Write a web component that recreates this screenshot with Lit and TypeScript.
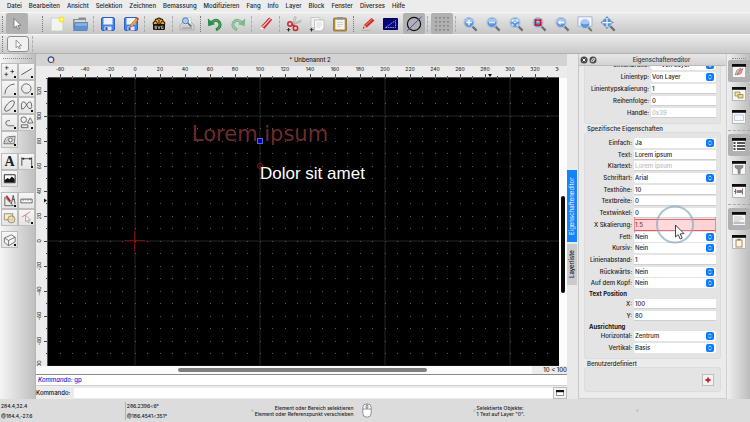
import { LitElement, html, svg, css, nothing } from "lit";
import { customElement, state } from "lit/decorators.js";
import { classMap } from "lit/directives/class-map.js";

const fontStack = css`Inter, Roboto, "Liberation Sans", sans-serif`;

/* ---------- icons ---------- */

const pointer = svg`<path d="M5 2.5V12l2.3-2 1.5 3.4 1.5-.7-1.5-3.2 3-.2z" fill="#fff" stroke="#6a6a6a" stroke-width=".8"/>`;
const lens = (inner: unknown) => svg`
  <path d="M10 10l4.6 4.6" stroke="#6e6e6e" stroke-width="2.2"/>
  <circle cx="7" cy="6.6" r="5" fill="#5a95dd" stroke="#b4c3d6" stroke-width="1.300"/>
  <path d="M2.8 5.6a4.400 4.400 0 0 1 8.4 0q-4.200 2-8.400 0z" fill="#a3c8f2"/>${inner}`;
const page = svg`<path d="M2 2h12v13H2z" fill="#f3f3ef" stroke="#c9c9c2" stroke-width=".8"/>`;
const floppy = svg`
  <rect x="1.5" y="1.5" width="13" height="13" rx="1.5" fill="#4a83e8" stroke="#2e5fc0"/>
  <path d="M3.5 2h9v6.500h-9z" fill="#eef3fc"/><path d="M4.500 10.500h7v4h-7z" fill="#dfe6f2"/>
  <path d="M5.500 11.200h2v2.800h-2z" fill="#35518c"/>`;

const toolbarIcons: Record<string, unknown> = {
  pointer,
  new: svg`${page}<circle cx="12.500" cy="3.500" r="3" fill="#f2e92c"/><circle cx="12.500" cy="3.500" r="1.300" fill="#fffbb0"/>`,
  open: svg`<path d="M1 3h5l1-1.500h7V12H1z" fill="#8b8f93"/><path d="M2.500 4h11v3h-11z" fill="#d5d7d8"/>
    <path d="M3 6.500h13l-1 8H1.500z" fill="#5f93cf" stroke="#4677b4" stroke-width=".7"/><path d="M3.600 7.200h11.600l-.3 2.500H3z" fill="#8ab3e0"/>`,
  save: floppy,
  saveAs: svg`${floppy}<path d="M7 11l.8-2.600L14 1.500l1.800 1.600-6.300 7z" fill="#f0a43a" stroke="#a8621a" stroke-width=".6"/>
    <path d="M13 2.600L14 1.500l1.800 1.600-1 1.100z" fill="#c8452e"/>`,
  svgExport: svg`<path d="M2.500 8.500Q1.500 6 4 5.500 4 2.500 6.200 3.200 8 .8 9.800 3.200 12 2.500 12 5.500q2.500.5 1.500 3z" fill="#f2a12c" stroke="#1a1206" stroke-width="1.100"/>
    <path d="M8 3.500v5M5 5l2 3.500M11 5L9 8.500" stroke="#1a1206" stroke-width=".9"/>
    <path d="M2 8.500h12v4.300q0 1.200-1.200 1.200H3.200Q2 14 2 12.800z" fill="#17130f"/>
    <path d="M5.700 10.200H3.900v1.100h1.600v1.400H3.700M6.800 9.900l1.200 2.900 1.200-2.900M12.300 10.200h-1.800v2.400h1.700v-1.200" stroke="#e6e2da" stroke-width=".7" fill="none"/>`,
  print: svg`<path d="M1 9l2.500-2.500h9L15 9v5H1z" fill="#d2d2d2" stroke="#a2a2a2" stroke-width=".7"/><path d="M4 1.500h8V9H4z" fill="#f4f6f8" stroke="#b5bcc4" stroke-width=".6"/>
    <circle cx="6.500" cy="4.800" r="3" fill="#a9cdf0" stroke="#5580b4"/><path d="M8.800 7l3.500 3.500" stroke="#5c6670" stroke-width="1.600"/><path d="M3 12h10" stroke="#888"/>`,
  undo: svg`<path d="M4.500 6.500q5-4.500 8 0 2.200 4.800-3.500 7.300" fill="none" stroke="#1e7d3c" stroke-width="3"/><path d="M4.500 6.500q5-4.500 8 0 2 4-2.500 6.700" fill="none" stroke="#43a75e" stroke-width="1.300"/><path d="M.8 2.500l.4 7.700 6.800-2z" fill="#2b8f49"/>`,
  redo: svg`<path d="M11.500 6.500q-5-4.500-8 0-2.200 4.800 3.500 7.300" fill="none" stroke="#74b189" stroke-width="3"/><path d="M11.500 6.500q-5-4.500-8 0-2 4 2.500 6.700" fill="none" stroke="#a5cfb2" stroke-width="1.200"/><path d="M15.200 2.500l-.4 7.700-6.800-2z" fill="#7db991"/>`,
  erase: svg`<path d="M3 10.500L11 1.500l3.200 2.300L6.300 13z" fill="#d8272b"/><path d="M4.500 11.200L12.500 2.600" stroke="#f6d6d6" stroke-width="1.200"/><path d="M3 10.500L6.300 13l-1.300 1.200q-2.500.3-3.500-2.200z" fill="#fbfbfb" stroke="#b98" stroke-width=".5"/>`,
  cut: svg`<path d="M6.500 9L14.500 4.200l.5 1.500z" fill="#d9d9d9" stroke="#999" stroke-width=".6"/><path d="M7.500 9.500L8.200.8l2 .2z" fill="#ececec" stroke="#999" stroke-width=".6"/>
    <circle cx="4" cy="8" r="2.200" fill="none" stroke="#d1242a" stroke-width="1.500"/><circle cx="9.500" cy="12.300" r="2.200" fill="none" stroke="#d1242a" stroke-width="1.500"/><path d="M5.500 8.500L8.800 10.500" stroke="#d1242a" stroke-width="1.500"/><path d="M2.500 12v3.500M.8 13.700h3.500" stroke="#222" stroke-width=".9"/>`,
  copy: svg`<path d="M2 1.500h9v10H2z" fill="#f0f0ee" stroke="#bbb" stroke-width=".7"/><path d="M5.500 4h9.500v8l-2.500 3h-7z" fill="#fafafa" stroke="#b0b0b0" stroke-width=".7"/><path d="M7.500 7h5.500M7.500 9h5.500M7.500 11h4" stroke="#cfcfcf" stroke-width=".8"/><path d="M2.500 12v3.500M.8 13.700h3.500" stroke="#222" stroke-width=".9"/>`,
  paste: svg`<rect x="1.500" y="2" width="13" height="13" rx="1" fill="#b78b3e" stroke="#8b6526" stroke-width=".7"/><path d="M3.300 3.500h9.400v10H3.300z" fill="#f3f3f0"/><path d="M5 1h6v2.600H5z" fill="#8e9196"/><path d="M5 6.500h6M5 8.500h6M5 10.500h4" stroke="#c4c4c4" stroke-width=".8"/>`,
  pencil: svg`<path d="M3 12.500L4 9l7.500-7 3 2.500-7.700 7z" fill="#d42a23"/><path d="M5.500 9.700l7-6.800" stroke="#f08a76"/><path d="M3 12.500L4 9l2.800 2.500z" fill="#e7c690"/><path d="M3 12.500l.5-1.500 1 .9z" fill="#222"/><path d="M1 14.500h10" stroke="#c9a4a0" stroke-width=".8"/>`,
  draft: svg`<path d="M.5 2.500h14v11H.5z" fill="#07077c" stroke="#04044f"/><path d="M2.500 11.500L12.500 4.500v7z" fill="none" stroke="#b8bcea" stroke-width=".8" stroke-dasharray="1.500 .8"/>`,
  linewidth: svg`<circle cx="8" cy="8" r="6.600" fill="none" stroke="#111" stroke-width="1.200"/><path d="M1 15L15.500.8" stroke="#3c3fd0" stroke-width=".9"/>`,
  grid: svg`<g stroke="#555" stroke-width=".9" stroke-dasharray="1.500 2.500"><path d="M2 1v15M6 1v15M10 1v15M14 1v15"/></g>`,
  zoomIn: lens(svg`<path d="M7 3.900v5.400M4.300 6.600h5.400" stroke="#fff" stroke-width="1.400"/>`),
  zoomOut: lens(svg`<path d="M4 6.600h6" stroke="#dbe9fb" stroke-width="1.400"/>`),
  zoomAuto: lens(svg`<path d="M4.200 5.500V4h1.600M8.200 4h1.600v1.500M9.800 7.700v1.500H8.200M5.800 9.200H4.200V7.700M6 6.600h2" stroke="#fff" stroke-width=".9" fill="none"/>`),
  zoomSel: lens(svg`<path d="M4.500 4.200h5v5h-5z" fill="none" stroke="#d0101c" stroke-width="1.300"/><path d="M3.600 3.300h2v2h-2zM8.400 3.300h2v2h-2zM3.600 8.100h2v2h-2zM8.400 8.100h2v2h-2z" fill="#e01020"/>`),
  zoomPrev: lens(svg`<path d="M3.500 6.600L6.500 4.200v1.600h4v1.600h-4V9z" fill="#fff"/>`),
  zoomWindow: svg`<path d="M1 .8h14v9.500H1z" fill="#f2f5fb" stroke="#9db0d4" stroke-width=".9"/><path d="M11 11l3.800 4" stroke="#777" stroke-width="2"/><circle cx="8" cy="8" r="4.600" fill="#5d97df" stroke="#c5d0e0"/><path d="M4 7.500a4 4 0 0 1 8 0q-4 1.500-8 0z" fill="#a4c8f3"/>`,
  zoomPan: svg`<path d="M10 10l4.600 4.600" stroke="#6e6e6e" stroke-width="2.200"/><circle cx="7" cy="6.600" r="4.600" fill="#5591dd" stroke="#aebfd6"/><path d="M7 .5v12.200M.9 6.600h12.200" stroke="#fff" stroke-width="1.100"/><path d="M7 0l1.500 2h-3zM7 13.200l1.500-2h-3zM.4 6.600l2-1.500v3zM13.600 6.600l-2-1.500v3z" fill="#5b82b8"/>`,
};

const toolIcons: Record<string, unknown> = {
  point: svg`<path d="M5 2v4M3 4h4M4.500 9v4M2.500 11h4M11 6v4M9 8h4" stroke="#333" stroke-width=".8"/>`,
  line: svg`<path d="M2.500 11.500L13.500 5" stroke="#444" stroke-width=".9"/>`,
  arc: svg`<path d="M3 14Q4 4 13.500 3.200" stroke="#555" stroke-width=".9" fill="none"/>`,
  circle: svg`<circle cx="7.800" cy="8" r="5" fill="none" stroke="#555" stroke-width=".9"/>`,
  ellipse: svg`<ellipse cx="8" cy="8.500" rx="7" ry="3" transform="rotate(-48 8 8.500)" fill="none" stroke="#555" stroke-width=".9"/>`,
  spline: svg`<path d="M3 12Q1.500 5 4.500 4q2.500 0 4 4t4 3.500q2-2 .5-6.500-2-2.500-5 2.500T3 12z" fill="none" stroke="#555" stroke-width=".9"/>`,
  polyline: svg`<path d="M13 11.500H7Q4 11 4 8.500T7 6h1.500" fill="none" stroke="#555" stroke-width=".9"/>`,
  shape: svg`<circle cx="5" cy="5" r="3" fill="none" stroke="#555" stroke-width=".9"/><path d="M9 8.500L12 3l3 5.500zM2.500 10.500h7v3h-7z" fill="none" stroke="#555" stroke-width=".9"/>`,
  hatch: svg`<path d="M2 12.500q1-7 5-7.500l7-.5-1 8z" fill="#ddd" stroke="#555" stroke-width=".8"/><path d="M3 11l5-5M5 12l7-7M8 12l5-5" stroke="#888" stroke-width=".6"/><circle cx="9" cy="8.500" r="2" fill="#f2f2f2" stroke="#555" stroke-width=".8"/>`,
  text: nothing,
  dimension: svg`<path d="M3 3.500v9M13.500 3.500v9M3 5h10.500" stroke="#333" stroke-width=".9"/><path d="M3 5l2.500-1.300v2.600zM13.500 5L11 3.700v2.600z" fill="#222"/>`,
  image: svg`<path d="M2.500 4h11.500v8.500H2.500z" fill="#fff" stroke="#222"/><path d="M3 12V9.500l3-2 2 1.300 2.500-3 3 2.700V12z" fill="#111"/>`,
  modify: svg`<path d="M3 4.500v9h9z" fill="none" stroke="#555" stroke-width=".9"/><path d="M4.500 3l4.500 6" stroke="#c3262a" stroke-width="2"/><path d="M12 2.500l-2 9M12 2.500l2 9M11 7h2.500" stroke="#444" stroke-width=".9"/>`,
  measure: svg`<path d="M2 6.500h12v4H2z" fill="#fafafa" stroke="#555" stroke-width=".9"/><path d="M4.500 6.500v2M7 6.500v1.500M9.500 6.500v2M12 6.500v1.500" stroke="#555" stroke-width=".7"/>`,
  block: svg`<path d="M2.500 4h9v6.500h-9z" fill="#f8ecc0" stroke="#777" stroke-width=".8"/><circle cx="10" cy="10" r="3.800" fill="#f3dd8e" fill-opacity=".7" stroke="#777" stroke-width=".8"/>`,
  select: svg`<path d="M3 7.500L12 2" stroke="#e46a6a" stroke-width=".9"/><path d="M7 5.500v7l1.700-1.400L10 13.800l1-.5-1-2.600 2.200-.2z" fill="#f5f5f5" stroke="#8a8a8a" stroke-width=".7"/>`,
  iso: svg`<path d="M2.500 6.500L10 3l4 2.500v5L7 14.500 2.500 11zM2.500 6.500L7 9v5.500M7 9l7-3.500" fill="#f4f4f4" stroke="#555" stroke-width=".8"/>`,
};

const dockBody: Record<string, unknown> = {
  layer: svg`<path d="M4 12l2-5 4-2-2 5z" fill="#ccc" stroke="#777" stroke-width=".6"/><path d="M6 12l2-4 4-2.500-2 5z" fill="#e79c93" stroke="#a55" stroke-width=".6"/>`,
  block: svg`<path d="M4 6h5v4H4z" fill="#f4e5a8" stroke="#887744" stroke-width=".7"/><path d="M7 8.500h5v3.500H7z" fill="#f0d880" stroke="#887744" stroke-width=".7"/>`,
  view: svg`<path d="M3.500 6h9v5.500h-9z" fill="#f4f8fd" stroke="#a9c4e4" stroke-width=".8"/>`,
  list: svg`<path d="M2.500 6h2M2.500 9h2M2.500 12h2" stroke="#111" stroke-width="1.300"/><path d="M6 6h8M6 9h8M6 12h8" stroke="#222" stroke-width="1.300"/>`,
  filter: svg`<path d="M4 5.500h8v2L9.200 9.500v4H7v-4L4 7.500z" fill="#8e8e8e" stroke="#666" stroke-width=".5"/>`,
  library: svg`<path d="M4.500 6v5M11.500 5.500v6M3 8.500h2" stroke="#555" stroke-width=".8"/><path d="M5.500 7h6v3h-6z" fill="#888"/><path d="M8 8.500h3" stroke="#c44" stroke-width=".7"/>`,
  command: svg`<path d="M3 6h8M3 8h10M3 10h6" stroke="#b5b5b5" stroke-width=".8"/><path d="M2.500 12h11" stroke="#777" stroke-width=".9"/>`,
  clipboard: svg`<path d="M4.500 5.500h7v8h-7z" fill="#b5883c"/><path d="M5.500 6.500h5v6h-5z" fill="#f5f5f5"/><path d="M6.500 4.800h3v1.500h-3z" fill="#777"/>`,
};

const icon16 = (body: unknown) =>
  html`<svg class="ico" viewBox="0 0 16 16" aria-hidden="true">${body}</svg>`;

/* ---------- drawing area ---------- */

const STEP = 12.5;
const ORIGIN_X = 87;
const ORIGIN_Y = 163;
const range = (from: number, to: number) =>
  Array.from({ length: Math.max(0, to - from + 1) }, (_, i) => from + i);

@customElement("cad-canvas")
export class CadCanvas extends LitElement {
  static styles = css`
    :host {
      display: grid;
      grid-template-columns: 12px minmax(0, 1fr) 8px;
      grid-template-rows: 12px minmax(0, 1fr);
      font-family: ${fontStack};
      background: #ececec;
      min-height: 0;
    }
    svg { display: block; width: 100%; height: 100%; min-height: 0; overflow: hidden; }
    .cell { overflow: hidden; min-height: 0; min-width: 0; position: relative; }
    .cell svg { position: absolute; inset: 0; }
    .num { font-size: 5px; font-weight: 500; fill: #333; text-anchor: middle; }
    .tick { stroke: #444; }
    .edge { stroke: #555; }
    .view { background: #000; }
    .axis { stroke: #131313; stroke-width: 2; }
    .dot { fill: #5c5c5c; }
    .zero { stroke: #7a0a0a; }
    .wide { font-family: "DejaVu Sans", sans-serif; font-size: 21px; fill: #6b2c2c; text-anchor: middle; }
    .plain { font-family: "Liberation Sans", Arial, sans-serif; font-size: 17px; fill: #fff; }
    .vscroll { background: #fcfcfc; grid-row: 1 / 3; grid-column: 3; display: flex; flex-direction: column; align-items: center; margin-top: 12px; }
    .vbefore { flex: 118; }
    .vthumb { flex: 97; width: 4px; border-radius: 2px; background: #0a0a0a; }
    .vafter { flex: 73; }
  `;

  @state() private viewWidth = 511;
  @state() private viewHeight = 288;
  private observer?: ResizeObserver;

  firstUpdated() {
    const view = this.renderRoot.querySelector(".view")!;
    this.observer = new ResizeObserver(([entry]) => {
      this.viewWidth = entry.contentRect.width;
      this.viewHeight = entry.contentRect.height;
    });
    this.observer.observe(view);
  }

  disconnectedCallback() {
    super.disconnectedCallback();
    this.observer?.disconnect();
  }

  render() {
    const x = (n: number) => ORIGIN_X + n * STEP;
    const y = (n: number) => ORIGIN_Y - n * STEP;
    const cols = range(Math.ceil(-ORIGIN_X / STEP), Math.ceil((this.viewWidth - ORIGIN_X) / STEP));
    const rows = range(-Math.ceil((this.viewHeight - ORIGIN_Y) / STEP), Math.floor(ORIGIN_Y / STEP));
    const major = (n: number) => n % 10 === 0;
    return html`
      <div class="cell"></div>
      <div class="cell"><svg>
        ${cols.map((n) => svg`<path class="tick" d="M${Math.floor(x(n)) + 0.5} ${n % 2 ? 10 : 8}V12"/>
          ${n % 2 ? nothing : svg`<text class="num" x=${x(n)} y="5">${n * 10}</text>`}`)}
        <path d="M440 8h4l-2 3z" fill="#111"/>
        <path class="edge" d="M0 11.500H${this.viewWidth}"/>
      </svg></div>
      <div class="cell"><svg>
        ${rows.map((n) => svg`<path class="tick" d="M${n % 2 ? 10 : 8} ${Math.floor(y(n)) + 0.5}H12"/>
          ${n % 2 ? nothing : svg`<text class="num" transform="translate(5 ${y(n)}) rotate(-90)">${n * 10}</text>`}`)}
        <path d="M8 120.500v4l3-2z" fill="#111"/>
        <path class="edge" d="M11.500 0V${this.viewHeight}"/>
      </svg></div>
      <div class="cell view"><svg role="img" aria-label="Zeichnung">
        ${cols.filter(major).map((n) => svg`<path class="axis" d="M${x(n)} 0V${this.viewHeight}"/>`)}
        ${rows.filter(major).map((n) => svg`<path class="axis" d="M0 ${y(n)}H${this.viewWidth}"/>`)}
        ${rows.map((r) => cols.map((c) => svg`<rect class="dot" x=${Math.floor(x(c))} y=${Math.floor(y(r))} width="1" height="1"/>`))}
        <path class="zero" d="M77 162.500h20M86.500 153v20"/>
        <text class="wide" x="212" y="63">Lorem ipsum</text>
        <rect x="209.500" y="60.500" width="5" height="5" fill="#0000c4" stroke="#5a6ac0"/>
        <circle cx="212" cy="88" r="2.500" fill="none" stroke="#a80c0c"/>
        <text class="plain" x="212" y="101">Dolor sit amet</text>
      </svg></div>
      <div class="vscroll"><i class="vbefore"></i><i class="vthumb"></i><i class="vafter"></i></div>
    `;
  }
}

/* ---------- property editor ---------- */

type Field = { label: string; value?: string; kind: "select" | "input" | "muted" | "hot" | "head" };

const general: Field[] = [
  { label: "Linienbreite:", value: "—\u00a0\u00a0Von Layer", kind: "select" },
  { label: "Linientyp:", value: "Von Layer", kind: "select" },
  { label: "Linientypskalierung:", value: "1", kind: "input" },
  { label: "Reihenfolge:", value: "0", kind: "input" },
  { label: "Handle:", value: "0x39", kind: "muted" },
];
const specific: Field[] = [
  { label: "Einfach:", value: "Ja", kind: "select" },
  { label: "Text:", value: "Lorem ipsum", kind: "input" },
  { label: "Klartext:", value: "Lorem ipsum", kind: "muted" },
  { label: "Schriftart:", value: "Arial", kind: "select" },
  { label: "Texthöhe:", value: "10", kind: "input" },
  { label: "Textbreite:", value: "0", kind: "input" },
  { label: "Textwinkel:", value: "0", kind: "input" },
  { label: "X Skalierung:", value: "1.5", kind: "hot" },
  { label: "Fett:", value: "Nein", kind: "select" },
  { label: "Kursiv:", value: "Nein", kind: "select" },
  { label: "Linienabstand:", value: "1", kind: "input" },
  { label: "Rückwärts:", value: "Nein", kind: "select" },
  { label: "Auf dem Kopf:", value: "Nein", kind: "select" },
  { label: "Text Position", kind: "head" },
  { label: "X:", value: "100", kind: "input" },
  { label: "Y:", value: "80", kind: "input" },
  { label: "Ausrichtung", kind: "head" },
  { label: "Horizontal:", value: "Zentrum", kind: "select" },
  { label: "Vertikal:", value: "Basis", kind: "select" },
];

@customElement("property-editor")
export class PropertyEditor extends LitElement {
  static styles = css`
    * { box-sizing: border-box; }
    :host {
      display: flex;
      flex-direction: column;
      font: 500 6px/8px ${fontStack};
      color: #222;
      background: #ebebeb;
      border-left: 1px solid #c6c6c6;
      border-right: 1px solid #cfcfcf;
      border-bottom: 1px solid #cfcfcf;
    }
    .bar { height: 12px; display: flex; align-items: center; padding-left: 1px; gap: 1px; background: linear-gradient(#e8e8e8, #d2d2d2); border-bottom: 1px solid #bbb; }
    .bar button { width: 8px; height: 8px; border: 0; padding: 0; background: none; }
    .bar svg { display: block; width: 8px; height: 8px; }
    .title { flex: 1; margin: 0; padding-right: 1px; text-align: center; font: inherit; color: #333; }
    .body { flex: 1; display: flex; flex-direction: column; padding: 0 5px 6px; }
    .group { border: 1px solid #dcdcdc; border-radius: 3px; background: #e4e4e4; display: flex; flex-direction: column; padding: 4px 4px 4px 0; }
    .general { height: 58px; flex: none; overflow: hidden; justify-content: flex-end; border-top: 0; border-radius: 0 0 3px 3px; }
    .general .row { flex: 0 0 12px; }
    .general .lab { width: 65px; }
    .specific { flex: 1; }
    .legend { margin: 0; padding: 1px 0 0 3px; height: 8px; font: inherit; line-height: 8px; flex: none; }
    .row { flex: 1 0 11px; display: flex; align-items: center; position: relative; }
    .lab { width: 48px; flex: none; text-align: right; padding-right: 1px; white-space: nowrap; }
    .field { flex: 1; min-width: 0; position: relative; display: flex; margin-left: 1px; }
    .head { flex: 0 0 9px; margin: 0; padding-left: 4px; font-weight: 700; font-size: 6px; line-height: 9px; color: #111; }
    input, select { width: 100%; height: 10px; margin: 0; border: 0; padding: 0 1px; border-radius: 0; font: inherit; color: #222; background: #fff; outline: 0; appearance: none; border-bottom: 1px solid #cfcfcf; }
    select { border: 0; border-radius: 2px; }
    .muted { color: #bbb; }
    .knob { position: absolute; right: 2px; top: 1px; width: 8px; height: 8px; pointer-events: none; }
    .hot { background: #ffd3d5; border-top: 1px solid #e8585c; border-bottom: 1px solid #e8585c; height: 12px; color: #7a3a3c; }
    .field.flag::before, .field.flag::after { content: ""; position: absolute; top: -2px; bottom: -2px; width: 1px; background: #f0888c; }
    .field.flag::before { left: 0; }
    .field.flag::after { right: 0; }
    .click { position: absolute; left: 50%; top: 50%; width: 40px; height: 40px; margin: -20px; z-index: 2; overflow: visible; pointer-events: none; }
    .custom { height: 25px; flex: none; align-items: flex-end; justify-content: center; padding: 0 6px 0 0; }
    .add { width: 12px; height: 12px; padding: 0; border: 1px solid #bdbdbd; background: #f3f3f3; display: grid; place-items: center; }
    .add svg { width: 6px; height: 6px; }
  `;

  private field(f: Field, id: string) {
    if (f.kind === "head") return html`<h3 class="head">${f.label}</h3>`;
    const hot = f.kind === "hot";
    return html`<div class="row">
      <label class="lab" for=${id}>${f.label}</label>
      <div class=${classMap({ field: true, flag: hot })}>
        ${f.kind === "select"
          ? html`<select id=${id}><option>${f.value}</option></select>
              <svg class="knob" viewBox="0 0 8 8"><rect width="8" height="8" rx="2" fill="#0a7bff"/>
                <path d="M2.500 3.200L4 1.800l1.500 1.400M2.500 4.800L4 6.200l1.500-1.400" fill="none" stroke="#fff" stroke-width=".8"/></svg>`
          : html`<input id=${id} class=${classMap({ muted: f.kind === "muted", hot })} .value=${f.value ?? ""} ?readonly=${f.kind === "muted"} />`}
        ${hot
          ? html`<svg class="click" viewBox="0 0 40 40">
              <circle cx="20" cy="19.500" r="18" fill="#fff" fill-opacity=".15" stroke="#8fa6bf" stroke-opacity=".7" stroke-width="2"/>
              <path d="M20.500 20v12l2.700-2.400 2 4.400 2-.9-2-4.200 3.800-.3z" fill="#fff" stroke="#333" stroke-width=".9"/></svg>`
          : nothing}
      </div>
    </div>`;
  }

  render() {
    return html`
      <header class="bar">
        <button aria-label="Schließen"><svg viewBox="0 0 8 8"><circle cx="4" cy="4" r="3.500" fill="#444"/><path d="M2.600 2.600l2.800 2.800M5.400 2.600L2.600 5.400" stroke="#fff"/></svg></button>
        <button aria-label="Abdocken"><svg viewBox="0 0 8 8"><circle cx="4" cy="4" r="3.500" fill="#444"/><path d="M2.300 3.800h2.200v1.800H2.300zM3.600 3.500V2.400h2.200v1.800H4.700" stroke="#fff" stroke-width=".7" fill="none"/></svg></button>
        <h2 class="title">Eigenschafteneditor</h2>
      </header>
      <div class="body">
        <section class="group general">${general.map((f, i) => this.field(f, `g${i}`))}</section>
        <h3 class="legend">Spezifische Eigenschaften</h3>
        <section class="group specific">${specific.map((f, i) => this.field(f, `s${i}`))}</section>
        <h3 class="legend">Benutzerdefiniert</h3>
        <section class="group custom">
          <button class="add" aria-label="Hinzufügen"><svg viewBox="0 0 6 6"><path d="M3 .5v5M.5 3h5" stroke="#cf2228" stroke-width="1.800"/></svg></button>
        </section>
      </div>`;
  }
}

/* ---------- application shell ---------- */

const menus = ["Datei", "Bearbeiten", "Ansicht", "Selektion", "Zeichnen", "Bemassung", "Modifizieren", "Fang", "Info", "Layer", "Block", "Fenster", "Diverses", "Hilfe"];
const toolbar = ["::", "pointer*", "::start", "new", "open", "|", "save", "saveAs", "|", "svgExport", "|", "print", "::", "undo", "redo", "|", "erase", "|", "cut", "copy", "paste", "::", "pencil", "draft", "linewidth*", "|", "grid*", "|", "zoomIn", "zoomOut", "zoomAuto", "zoomSel", "zoomPrev", "zoomWindow", "zoomPan"];
const tools = [
  ["point", "line", "arc", "circle", "ellipse", "spline", "polyline", "shape", "hatch"],
  ["text", "dimension", "image"],
  ["modify", "measure", "block", "select"],
  ["iso"],
];
const noFlyout = new Set(["text", "image", "measure", "block"]);
const docks = [["layer*", "block", "view"], ["list*", "filter", "library"], ["command*", "clipboard"]];

@customElement("app-root")
export class AppRoot extends LitElement {
  static styles = css`
    * { box-sizing: border-box; }
    :host { display: flex; flex-direction: column; min-height: 100vh; font: 500 6px/8px ${fontStack}; color: #222; background: #ebebeb; overflow: hidden; }
    button { font: inherit; color: inherit; padding: 0; margin: 0; border: 0; background: none; }
    .ico { display: block; width: 16px; height: 16px; }

    .menu { height: 12px; flex: none; display: flex; align-items: center; gap: 7px; padding: 0 7px; background: #ececec; }
    .bar { height: 22px; flex: none; display: flex; align-items: center; gap: 1px; padding-left: 1px; background: linear-gradient(#ebebeb, #c6c6c6); border-top: 1px solid #f8f8f8; }
    .tb { width: 22px; height: 21px; flex: none; display: grid; place-items: center; border-radius: 2px; }
    .on { background: #b1b1b1; }
    .grip, .rule { width: 4px; height: 16px; flex: none; }
    .grip::before { content: ""; display: block; width: 1px; height: 100%; margin: 0 auto; border-left: 1px dotted #777; }
    .rule::before { content: ""; display: block; width: 1px; height: 100%; margin: 0 auto; border-left: 1px dashed #adadad; }
    .start { margin-left: 12px; }

    .options { height: 20px; flex: none; display: flex; align-items: center; gap: 2px; padding-left: 1px; background: linear-gradient(#ebebeb, #c9c9c9); border-top: 1px solid #f4f4f4; border-bottom: 1px solid #b2b2b2; }
    .opt { width: 22px; height: 16px; border: 1px solid #8f8f8f; border-radius: 3px; background: #f1f1f1; display: grid; place-items: center; }
    .opt .ico { width: 13px; height: 13px; }

    .main { flex: 1; display: flex; min-height: 0; }
    .tools { width: 36px; flex: none; padding: 4px 1px 0; background: linear-gradient(90deg, #f5f5f5, #bfbfbf); border-right: 1px solid #b5b5b5; }
    .dotline { height: 0; margin: 0 2px 4px; border-top: 1px dotted #888; }
    .set { display: grid; grid-template-columns: 17px 17px; margin-bottom: 5px; }
    .tool { width: 17px; height: 17px; position: relative; background: linear-gradient(#f6f6f6, #e4e4e4); border: 1px solid #bcbcbc; display: grid; place-items: center; }
    .tool .ico { width: 15px; height: 15px; }
    .fly::after { content: ""; position: absolute; right: 1px; bottom: 1px; width: 2px; height: 2px; background: #111; }
    .glyph { font: 700 14px/15px "Liberation Serif", serif; color: #222; }

    .center { flex: 1; min-width: 0; display: flex; flex-direction: column; }
    .tab { height: 12px; flex: none; display: flex; align-items: center; background: #d3d3d3; padding: 0 2px 0 11px; }
    .tab svg { width: 8px; height: 8px; }
    .tab h1 { flex: 1; text-align: center; font: inherit; margin: 0; }
    cad-canvas { flex: 1; }
    .hscroll { height: 8px; flex: none; display: flex; align-items: center; background: #fafafa; }
    .hbefore { flex: 142; }
    .hthumb { flex: 249; height: 4px; border-radius: 2px; background: #7f7f7f; }
    .hafter { flex: 105; }
    .scale { width: 35px; text-align: right; background: #ececec; white-space: nowrap; }
    .history { height: 12px; flex: none; margin: 0; padding: 1px 2px; background: #fff; border-top: 1px solid #8b8b8b; border-bottom: 1px solid #cfcfcf; color: #1a1acc; }
    .history em { font-style: italic; }
    .prompt { height: 13px; flex: none; display: flex; align-items: center; background: #ececec; }
    .prompt label { width: 38px; color: #111; }
    .prompt input { flex: 1; min-width: 0; height: 10px; border: 0; padding: 0 2px; font: inherit; background: #fff; outline: 0; }
    .prompt button { width: 14px; height: 12px; border: 1px solid #bbb; background: #f2f2f2; display: grid; place-items: center; }
    .prompt svg { width: 8px; height: 6px; }

    .tabs { width: 11px; flex: none; display: flex; flex-direction: column; gap: 2px; padding-top: 116px; background: #e9e9e9; }
    .tabs button { writing-mode: vertical-rl; transform: rotate(180deg); width: 10px; text-align: center; background: #cbcbcb; line-height: 10px; }
    .tabs .first { height: 72px; background: #1583fb; color: #dcebff; }
    .tabs .second { height: 41px; }
    property-editor { width: 149px; flex: none; }
    .docks { width: 23px; flex: none; padding: 4px 0 0 1px; background: linear-gradient(90deg, #efefef, #bdbdbd); }
    .docks .dotline { margin: 0 4px 1px; }
    .dockset { display: flex; flex-direction: column; gap: 1px; }
    .dockset + .dockset { border-top: 1px dashed #aaa; margin-top: 2px; padding-top: 3px; }
    .dock { height: 22px; display: grid; place-items: center; border-radius: 2px; }

    .status { height: 23px; flex: none; display: grid; grid-template-columns: 126fr 127fr 118fr 99fr 165fr 115fr; align-items: center; background: #dcdcdc; font-size: 5px; line-height: 6px; }
    .coords { display: flex; flex-direction: column; gap: 4px; padding: 1px; white-space: nowrap; }
    .coords + .coords { border-left: 1px solid #b2b2b2; }
    .hint { white-space: nowrap; display: flex; align-items: center; gap: 1px; }
    .right { justify-self: end; text-align: right; margin-right: 21px; }
    .mark { width: 3px; height: 3px; border-radius: 50%; background: #c6c6c6; flex: none; }
    .mousebox { margin-left: -12px; height: 15px; }
    .mousebox svg { width: 10px; height: 15px; display: block; }
  `;

  private toolbarItem(entry: string) {
    if (entry === "|") return html`<span class="rule"></span>`;
    if (entry.startsWith("::")) return html`<span class=${classMap({ grip: true, start: entry === "::start" })}></span>`;
    const name = entry.replace("*", "");
    return html`<button class=${classMap({ tb: true, on: entry.endsWith("*") })} aria-label=${name}>${icon16(toolbarIcons[name])}</button>`;
  }

  private dock(entry: string) {
    const name = entry.replace("*", "");
    return html`<button class=${classMap({ dock: true, on: entry.endsWith("*") })} aria-label=${name}>
      ${icon16(svg`<path d="M1.500 1.500h13v13h-13z" fill="#f7f7f7" stroke="#aaa" stroke-width=".8"/><path d="M1 1h14v2.800H1z" fill="#0c0c0c"/>${dockBody[name]}`)}
    </button>`;
  }

  render() {
    return html`
      <nav class="menu">${menus.map((m) => html`<button>${m}</button>`)}</nav>
      <div class="bar">${toolbar.map((t) => this.toolbarItem(t))}</div>
      <div class="options">
        <span class="grip"></span>
        <button class="opt" aria-label="Auswahl">${icon16(pointer)}</button>
        <span class="rule"></span>
      </div>
      <div class="main">
        <aside class="tools">
          <div class="dotline"></div>
          ${tools.map((set) => html`<div class="set">${set.map((name) => html`
            <button class=${classMap({ tool: true, fly: !noFlyout.has(name) })} aria-label=${name}>
              ${name === "text" ? html`<span class="glyph">A</span>` : icon16(toolIcons[name])}
            </button>`)}</div>`)}
        </aside>
        <main class="center">
          <div class="tab">
            <svg viewBox="0 0 8 8"><circle cx="4" cy="3.700" r="2.800" fill="#dfe8f6" stroke="#31477c" stroke-width="1.200"/><path d="M5.200 5l2 2.300" stroke="#e0942d" stroke-width="1.400"/></svg>
            <h1>* Unbenannt 2</h1>
          </div>
          <cad-canvas></cad-canvas>
          <div class="hscroll"><i class="hbefore"></i><i class="hthumb"></i><i class="hafter"></i><span class="scale">10 &lt; 100</span></div>
          <p class="history"><em>Kommando:</em> gp</p>
          <div class="prompt">
            <label for="cmd">Kommando:</label><input id="cmd" />
            <button aria-label="Verlauf"><svg viewBox="0 0 8 6"><path d="M.5.5h7v5h-7z" fill="#fff" stroke="#666" stroke-width=".7"/><path d="M0 0h8v2.200H0z" fill="#111"/></svg></button>
          </div>
        </main>
        <div class="tabs"><button class="first">Eigenschafteneditor</button><button class="second">Layerliste</button></div>
        <property-editor></property-editor>
        <aside class="docks">
          <div class="dotline"></div>
          ${docks.map((set) => html`<div class="dockset">${set.map((d) => this.dock(d))}</div>`)}
        </aside>
      </div>
      <footer class="status">
        <div class="coords"><span>284.4,32.4</span><span>@184.4,-27.6</span></div>
        <div class="coords"><span>286.2396&lt;6°</span><span>@186.4541&lt;351°</span></div>
        <div class="hint right"><i class="mark"></i><span>Element oder Bereich selektieren<br />Element oder Referenzpunkt verschieben</span></div>
        <div class="mousebox"><svg viewBox="0 0 10 15"><rect x=".8" y=".8" width="8.400" height="13.400" rx="4" fill="#fff" stroke="#777" stroke-width=".8"/><path d="M1 6h8M5 1v1.500M5 5v1" stroke="#777" stroke-width=".8"/><rect x="4" y="2.200" width="2" height="3" rx="1" fill="#ddd" stroke="#555" stroke-width=".6"/></svg></div>
        <div class="hint"><i class="mark"></i><span>Selektierte Objekte:<br />1 Text auf Layer "0".</span></div>
        <div class="hint"><i class="mark"></i></div>
      </footer>`;
  }
}
